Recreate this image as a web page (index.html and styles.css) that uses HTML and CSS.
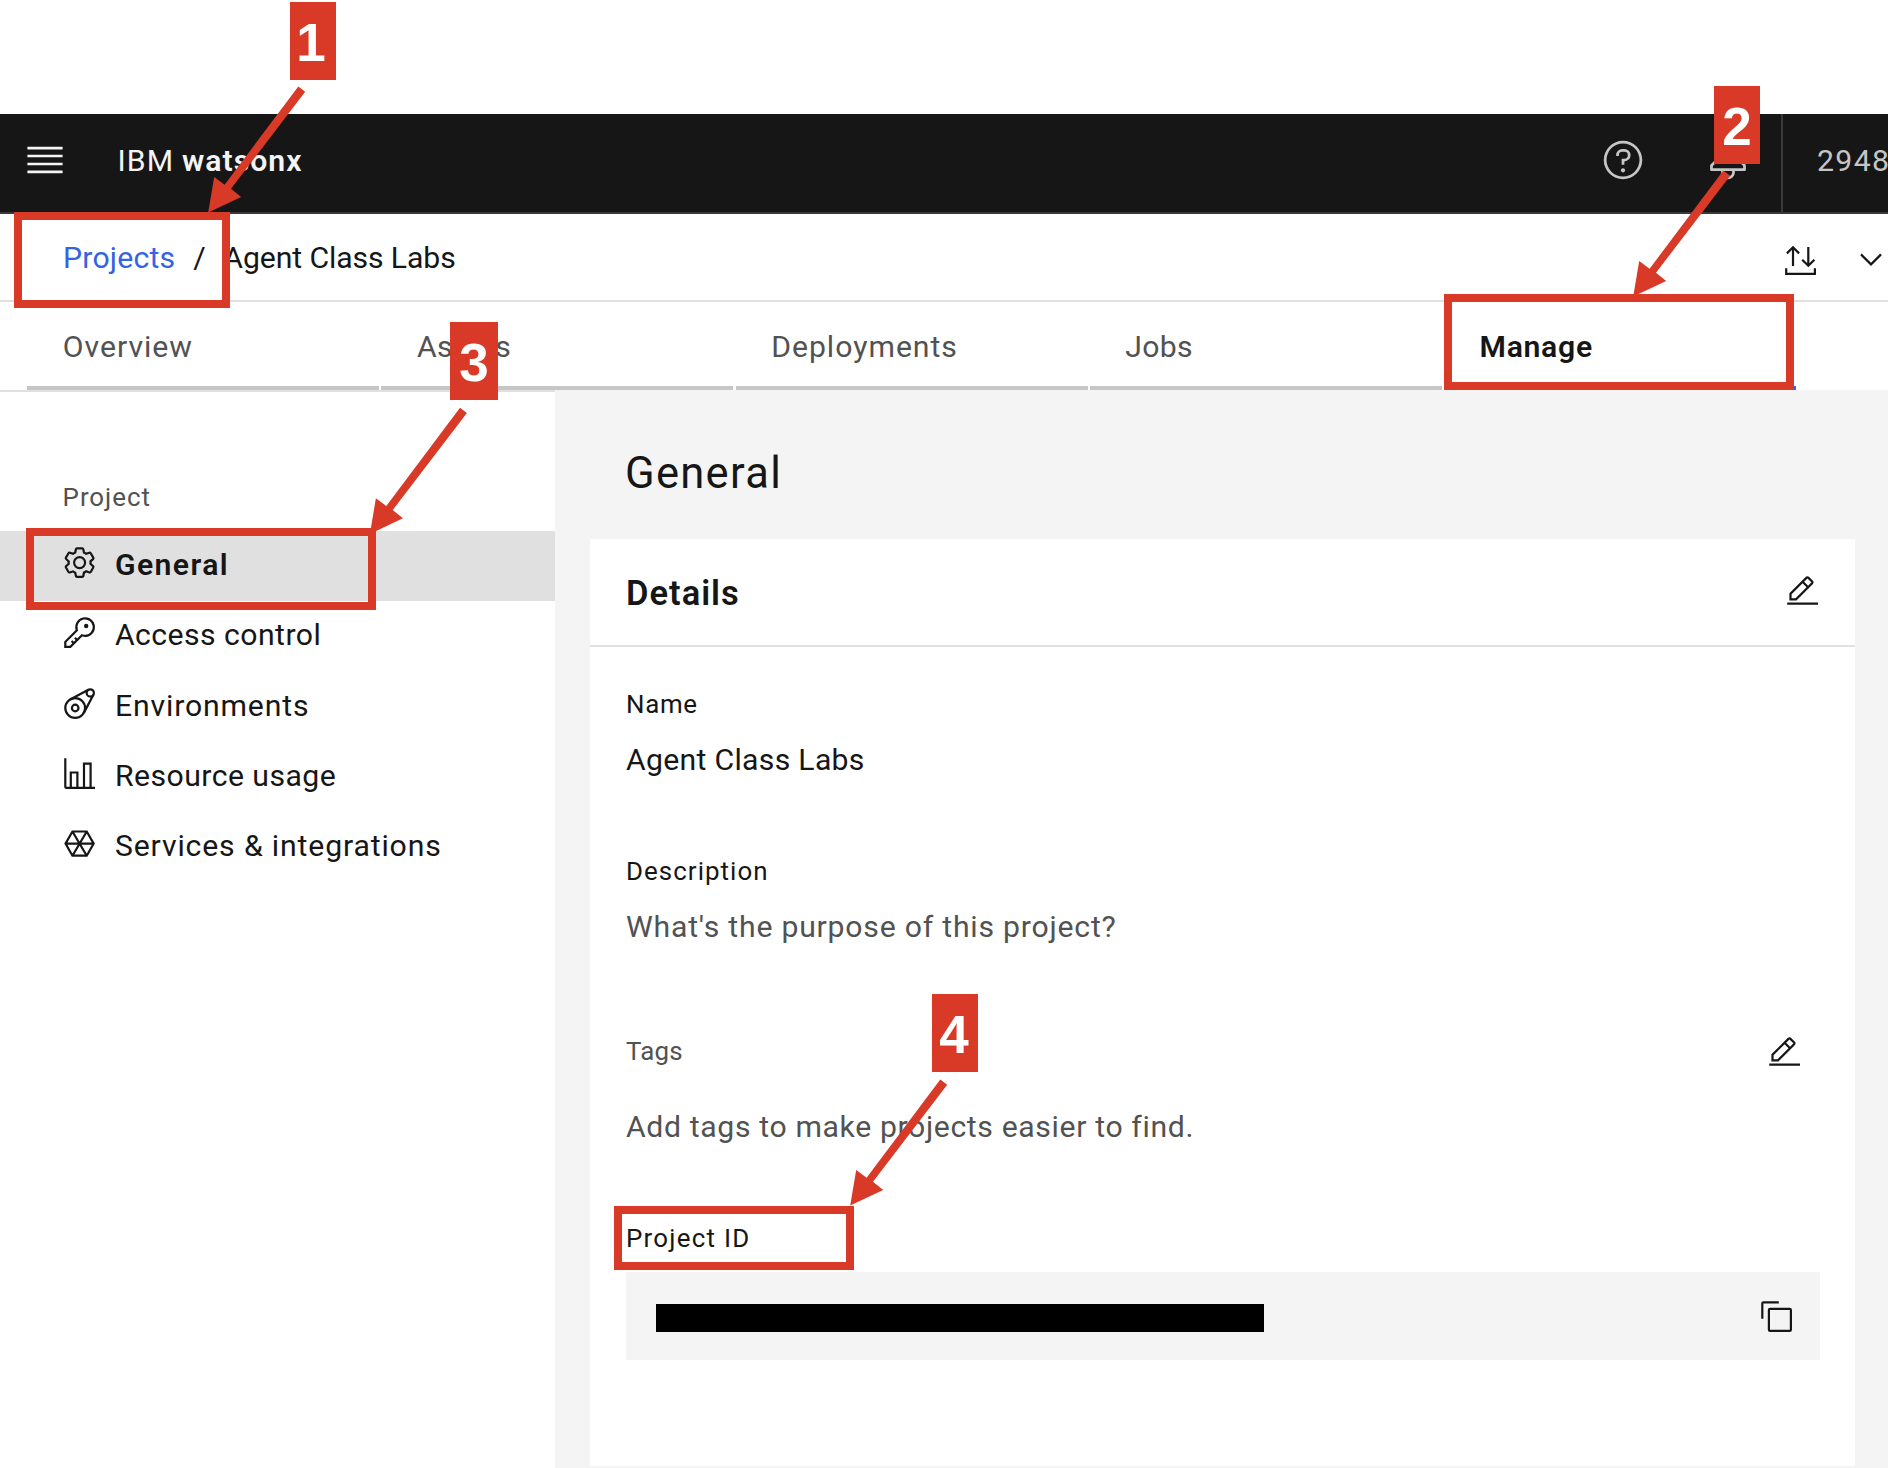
FILE: index.html
```html
<!DOCTYPE html>
<html lang="en">
<head>
<meta charset="utf-8">
<title>IBM watsonx - Agent Class Labs</title>
<link rel="stylesheet" href="styles.css">
</head>
<body>
<svg class="defs" aria-hidden="true">
  <symbol id="edit" viewBox="0 0 32 32"><path d="M2 26H30V28H2z"/><path d="M25.4,9c.8-.8.8-2,0-2.8l-3.6-3.6c-.8-.8-2-.8-2.8,0l-15,15V24h6.4L25.4,9z M20.4,4L24,7.6l-3,3L17.4,7L20.4,4z M6,22v-3.6l10-10l3.6,3.6l-10,10H6z"/></symbol>
</svg>

<header class="topbar">
  <svg class="icon-lg menu" viewBox="0 0 20 20"><path d="M2 4h16v1.2H2zM2 7.6h16v1.2H2zM2 11.2h16v1.2H2zM2 14.8h16V16H2z"/></svg>
  <div class="brand"><span class="brand-ibm">IBM</span> <b class="brand-product">watsonx</b></div>
  <svg class="icon-lg help" viewBox="0 0 32 32"><path d="M16,2A14,14,0,1,0,30,16,14,14,0,0,0,16,2Zm0,26A12,12,0,1,1,28,16,12,12,0,0,1,16,28Z"/><circle cx="16" cy="23.5" r="1.5"/><path d="M17,8H15.5A4.49,4.49,0,0,0,11,12.5V13h2v-.5A2.5,2.5,0,0,1,15.5,10H17a2.5,2.5,0,0,1,0,5H15v4.5h2V17a4.5,4.5,0,0,0,0-9Z"/></svg>
  <svg class="icon-lg bell" viewBox="0 0 32 32"><path d="M28.7071,19.293,26,16.5859V13a10.0136,10.0136,0,0,0-9-9.9492V1H15V3.0508A10.0136,10.0136,0,0,0,6,13v3.5859L3.2929,19.293A1,1,0,0,0,3,20v3a1,1,0,0,0,1,1h7v.7768a5.152,5.152,0,0,0,4.5,5.1987A5.0057,5.0057,0,0,0,21,25V24h7a1,1,0,0,0,1-1V20A1,1,0,0,0,28.7071,19.293ZM19,25a3,3,0,0,1-6,0V24h6Zm8-3H5V20.4141L7.707,17.707A1,1,0,0,0,8,17V13a8,8,0,0,1,16,0v4a1,1,0,0,0,.293.707L27,20.4141Z"/></svg>
  <div class="account">2948</div>
</header>

<div class="crumbs">
  <a class="crumb-link">Projects</a><span class="crumb-sep">/</span><span class="crumb-current">Agent Class Labs</span>
  <svg class="transfer" viewBox="0 0 36 36"><path d="M10 4.4V23M3.9 10.4 10 4.3l6.1 6.1M25.3 4v18.7M19.2 16.7l6.1 6.1 6.1-6.1M3.2 25.3v5.6h28.7v-5.6"/></svg>
  <svg class="chevron" viewBox="0 0 22 14"><path d="M1 1.4 11 11.4 21 1.4"/></svg>
</div>

<nav class="tabs">
  <a class="tab tab-wide">Overview</a>
  <a class="tab">Assets</a>
  <a class="tab tab-wide">Deployments</a>
  <a class="tab">Jobs</a>
  <a class="tab tab-active">Manage</a>
</nav>

<div class="content">
  <aside class="sidebar">
    <div class="side-label">Project</div>
    <a class="side-item side-active">
      <svg class="icon" viewBox="0 0 32 32"><path d="M27,16.76c0-.25,0-.5,0-.76s0-.51,0-.77l1.92-1.68A2,2,0,0,0,29.3,11L26.94,7a2,2,0,0,0-1.73-1,2,2,0,0,0-.64.1l-2.43.82a11.35,11.35,0,0,0-1.31-.75l-.51-2.52a2,2,0,0,0-2-1.61H13.64a2,2,0,0,0-2,1.61l-.51,2.52a11.48,11.48,0,0,0-1.32.75L7.43,6.06A2,2,0,0,0,6.79,6,2,2,0,0,0,5.06,7L2.7,11a2,2,0,0,0,.41,2.51L5,15.24c0,.25,0,.5,0,.76s0,.51,0,.77L3.11,18.45A2,2,0,0,0,2.7,21L5.06,25a2,2,0,0,0,1.73,1,2,2,0,0,0,.64-.1l2.43-.82a11.35,11.35,0,0,0,1.31.75l.51,2.52a2,2,0,0,0,2,1.61h4.72a2,2,0,0,0,2-1.61l.51-2.52a11.48,11.48,0,0,0,1.32-.75l2.42.82a2,2,0,0,0,.64.1,2,2,0,0,0,1.73-1L29.3,21a2,2,0,0,0-.41-2.51ZM25.21,24l-3.43-1.16a8.86,8.86,0,0,1-2.71,1.57L18.36,28H13.64l-.71-3.55a9.36,9.36,0,0,1-2.7-1.57L6.79,24,4.43,20l2.72-2.4a8.9,8.9,0,0,1,0-3.13L4.43,12,6.79,8l3.43,1.16a8.86,8.86,0,0,1,2.71-1.57L13.64,4h4.72l.71,3.55a9.36,9.36,0,0,1,2.7,1.57L25.21,8,27.57,12l-2.72,2.4a8.9,8.9,0,0,1,0,3.13L27.57,20Z"/><path d="M16,22a6,6,0,1,1,6-6A5.94,5.94,0,0,1,16,22Zm0-10a3.91,3.91,0,0,0-4,4,3.91,3.91,0,0,0,4,4,3.91,3.91,0,0,0,4-4A3.91,3.91,0,0,0,16,12Z"/></svg>
      <span>General</span>
    </a>
    <a class="side-item">
      <svg class="icon" viewBox="0 0 32 32"><path d="M21,2a8.9977,8.9977,0,0,0-8.6119,11.6118L2,24v6H8L18.3881,19.6118A9,9,0,1,0,21,2Zm0,16a7.0125,7.0125,0,0,1-2.0322-.3022L17.821,17.35l-.8472.8472-3.1811,3.1812L12.4141,20,11,21.4141l1.3787,1.3786-1.5859,1.586L9.4141,23,8,24.4141l1.3787,1.3786L7.1716,28H4V24.8284l9.8023-9.8023.8472-.8474-.3473-1.1467A7,7,0,1,1,21,18Z"/><circle cx="22" cy="10" r="2"/></svg>
      <span>Access control</span>
    </a>
    <a class="side-item side-wide">
      <svg class="icon icon-line" viewBox="0 0 32 32"><circle cx="12" cy="20" r="9"/><circle cx="12" cy="20" r="3"/><circle cx="25.7" cy="6.3" r="3.3"/><path d="M7.8 12 24 3.4M20 24.2 28.7 7.8"/></svg>
      <span>Environments</span>
    </a>
    <a class="side-item">
      <svg class="icon" viewBox="0 0 32 32"><path d="M27,28V6H19V28H15V14H7V28H4V2H2V28a2,2,0,0,0,2,2H30V28ZM13,28H9V16h4Zm12,0H21V8h4Z"/></svg>
      <span>Resource usage</span>
    </a>
    <a class="side-item side-wide">
      <svg class="icon icon-line" viewBox="0 0 32 32"><path d="M3.2 16 9.5 5h13L28.8 16 22.5 27h-13ZM3.2 16h25.6M9.5 5l13 22M22.5 5l-13 22"/></svg>
      <span>Services &amp; integrations</span>
    </a>
  </aside>

  <main class="panel">
    <h1 class="title">General</h1>
    <section class="card">
      <div class="card-head">
        <h2 class="card-title">Details</h2>
        <svg class="icon"><use href="#edit"/></svg>
      </div>
      <div class="card-body">
        <div class="label label-name">Name</div>
        <div class="value">Agent Class Labs</div>
        <div class="label label-description">Description</div>
        <div class="value value-description muted">What's the purpose of this project?</div>
        <div class="tags-row">
          <div class="label label-tags muted">Tags</div>
          <svg class="icon"><use href="#edit"/></svg>
        </div>
        <div class="value value-tags muted">Add tags to make projects easier to find.</div>
        <div class="label label-id">Project ID</div>
        <div class="id-box">
          <div class="redacted"></div>
          <svg class="icon" viewBox="0 0 32 32"><path d="M28,10V28H10V10H28m0-2H10a2,2,0,0,0-2,2V28a2,2,0,0,0,2,2H28a2,2,0,0,0,2-2V10a2,2,0,0,0-2-2Z"/><path d="M4,18H2V4A2,2,0,0,1,4,2H18V4H4Z"/></svg>
        </div>
      </div>
    </section>
  </main>
</div>

<!-- Numbered callouts over the page -->
<div class="callouts">
  <div class="frame frame-1"></div>
  <div class="frame frame-2"></div>
  <div class="frame frame-3"></div>
  <div class="frame frame-4"></div>
  <svg class="arrows" viewBox="0 0 1888 1468">
    <symbol id="arrow" viewBox="0 0 110 140" width="110" height="140"><path d="M98.3 6.4 105.2 11.7 31 108.8 41.2 117 8.2 132.6 14.2 97 24.6 104.8Z"/></symbol>
    <use href="#arrow" x="200" y="80"/>
    <use href="#arrow" x="1625" y="164"/>
    <use href="#arrow" x="361.7" y="401.3"/>
    <use href="#arrow" x="842" y="1073"/>
  </svg>
  <div class="badge badge-1">1</div>
  <div class="badge badge-2">2</div>
  <div class="badge badge-3">3</div>
  <div class="badge badge-4">4</div>
</div>
</body>
</html>
```
FILE: styles.css
```css
* { box-sizing: border-box; }

body {
  margin: 0;
  position: relative;
  width: 1888px;
  height: 1468px;
  padding-top: 114px;
  overflow: hidden;
  display: flex;
  flex-direction: column;
  background: #fff;
  color: #161616;
  font: 30.2px/40px Roboto, "Liberation Sans", sans-serif;
}

h1, h2 { margin: 0; }
svg { display: block; flex: none; fill: currentColor; }
.defs { position: absolute; width: 0; height: 0; }
.icon { width: 35.2px; height: 35.2px; }
.icon-line { fill: none; stroke: currentColor; stroke-width: 2; }
.icon-lg { width: 44px; height: 44px; }
.muted { color: #525252; }

/* Top bar */
.topbar {
  flex: none;
  height: 100px;
  display: flex;
  align-items: center;
  padding: 0 0 6px 22.6px;
  background: #161616;
  border-bottom: 2px solid #393939;
  color: #f4f4f4;
}
.brand { margin-left: 50.8px; padding-top: 1px; white-space: pre; }
.brand-ibm { letter-spacing: 1.2px; }
.brand-product { font-weight: 600; letter-spacing: 1.05px; }
.help { margin-left: auto; color: #c6c6c6; }
.bell { margin-left: 61px; color: #c6c6c6; }
.account {
  width: 107px;
  height: 98px;
  margin: 0 0 -6px 31px;
  padding: 27px 0 0 34px;
  border-left: 2px solid #393939;
  color: #c6c6c6;
  letter-spacing: 1.4px;
  overflow: hidden;
}

/* Breadcrumb */
.crumbs {
  flex: none;
  height: 88px;
  display: flex;
  align-items: center;
  padding: 1px 6px 0 63px;
  border-bottom: 2px solid #e0e0e0;
}
.crumb-link { color: #3563e3; letter-spacing: 0.2px; }
.crumb-sep { width: 12px; margin: 0 18px 0 18px; }
.crumb-current { letter-spacing: -0.1px; }
.transfer {
  width: 36px;
  height: 36px;
  margin: 7px 0 0 auto;
  fill: none;
  stroke: currentColor;
  stroke-width: 2.2;
}
.chevron {
  width: 22px;
  height: 14px;
  margin: 5px 0 0 41px;
  fill: none;
  stroke: currentColor;
  stroke-width: 2.2;
}

/* Tabs */
.tabs { flex: none; display: flex; gap: 2.2px; height: 88px; padding-left: 27.2px; }
.tab {
  width: 352px;
  padding: 24.5px 0 0 35.6px;
  border-bottom: 4px solid #c6c6c6;
  color: #525252;
  letter-spacing: 0.3px;
}
.tab-wide { letter-spacing: 0.98px; }
.tab-active { border-color: #3563e3; color: #161616; font-weight: 600; letter-spacing: 0.7px; }

.content { flex: 1; display: flex; min-height: 0; }

/* Side navigation */
.sidebar {
  width: 555px;
  padding-top: 89px;
  border-top: 2px solid #e0e0e0;
  letter-spacing: 0.45px;
}
.side-label {
  margin-bottom: 18px;
  padding-left: 62.6px;
  color: #525252;
  font-size: 25.9px;
  line-height: 32px;
  letter-spacing: 0.95px;
}
.side-item {
  display: flex;
  align-items: center;
  gap: 17.6px;
  height: 70.3px;
  padding-left: 62.2px;
}
.side-item .icon { margin-bottom: 7px; }
.side-item span { margin-bottom: 2px; }
.side-wide { letter-spacing: 0.85px; }
.side-active { background: #e0e0e0; font-weight: 600; letter-spacing: 1.4px; }

/* Details panel */
.panel { flex: 1; padding: 59px 33px 0 35px; background: #f4f4f4; }
.title {
  margin-bottom: 40px;
  padding-left: 35px;
  font-size: 43.5px;
  font-weight: 400;
  line-height: 50px;
  letter-spacing: 1.3px;
}
.card { height: 927px; background: #fff; }
.card-head {
  height: 108px;
  display: flex;
  align-items: center;
  justify-content: space-between;
  padding: 0 35px 0 36px;
  border-bottom: 2px solid #e0e0e0;
}
.card-title { padding-top: 2px; font-size: 34.5px; font-weight: 600; letter-spacing: 1px; }
.card-body { padding: 41px 35px 0 36px; }
.label { font-size: 25.9px; line-height: 32px; letter-spacing: 0.7px; }
.value { margin-top: 20px; letter-spacing: 0.3px; }
.label-description { margin-top: 75px; letter-spacing: 1.05px; }
.value-description { letter-spacing: 0.78px; }
.tags-row {
  display: flex;
  align-items: center;
  justify-content: space-between;
  height: 32px;
  margin-top: 88px;
  padding-right: 18px;
}
.tags-row .icon { margin-top: 3px; }
.label-tags { letter-spacing: 0.2px; }
.value-tags { margin-top: 40px; letter-spacing: 0.63px; }
.label-id { margin-top: 75px; letter-spacing: 1.25px; }
.id-box {
  display: flex;
  align-items: center;
  justify-content: space-between;
  height: 88px;
  margin-top: 18px;
  padding: 0 26px 0 30px;
  background: #f4f4f4;
}
.id-box .icon { margin-top: 2px; }
.redacted { width: 608px; height: 28px; margin-top: 4px; background: #000; }

/* Callouts */
.callouts { position: absolute; inset: 0; }
.frame { position: absolute; border: 8px solid #d93a27; }
.frame-1 { left: 14px; top: 212px; width: 216px; height: 96px; }
.frame-2 { left: 1444px; top: 294px; width: 350px; height: 96px; }
.frame-3 { left: 26px; top: 528px; width: 350px; height: 82px; }
.frame-4 { left: 614px; top: 1206px; width: 240px; height: 64px; }
.arrows { position: absolute; left: 0; top: 0; width: 1888px; height: 1468px; fill: #d93a27; }
.badge {
  position: absolute;
  width: 46px;
  height: 78px;
  background: #d93a27;
  color: #fff;
  font: bold 53px/82px "Liberation Sans", Arial, sans-serif;
  text-align: center;
}
.badge-1 { left: 290px; top: 2px; padding-right: 4px; }
.badge-2 { left: 1714px; top: 86px; }
.badge-3 { left: 450px; top: 322px; width: 48px; }
.badge-4 { left: 932px; top: 994px; padding-right: 2px; }
```
